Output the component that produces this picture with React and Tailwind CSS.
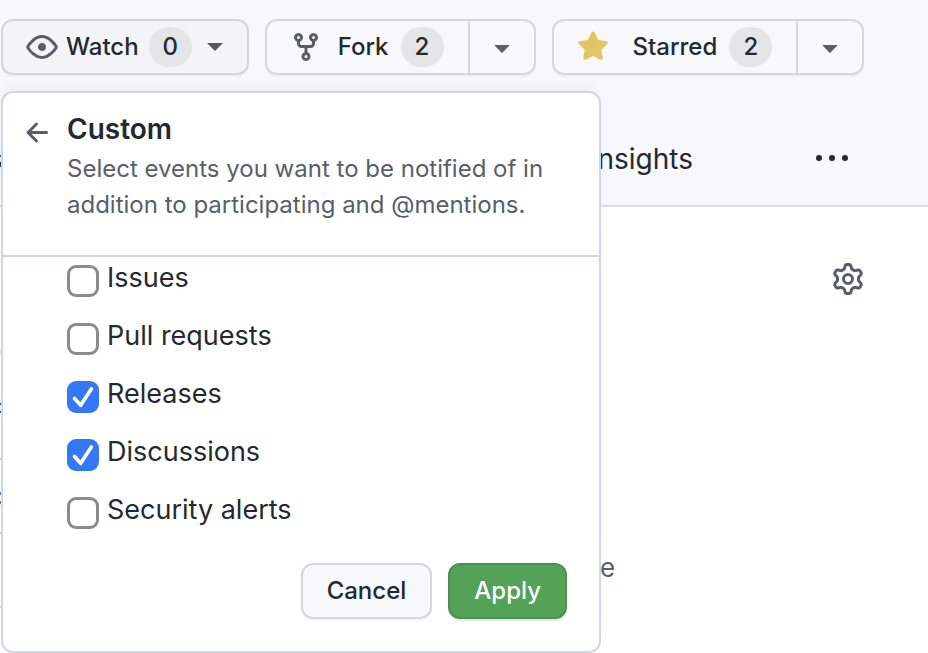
import { useState } from "react";

function Octicon({ d, className = "" }) {
  return (
    <svg viewBox="0 0 16 16" fill="currentColor" aria-hidden="true" className={`size-8 shrink-0 ${className}`}>
      <path d={d} />
    </svg>
  );
}

const EYE =
  "M8 2c1.981 0 3.671.992 4.933 2.078 1.27 1.091 2.187 2.345 2.637 3.023a1.62 1.62 0 0 1 0 1.798c-.45.678-1.367 1.932-2.637 3.023C11.67 13.008 9.981 14 8 14c-1.981 0-3.671-.992-4.933-2.078C1.797 10.83.88 9.576.43 8.898a1.62 1.62 0 0 1 0-1.798c.45-.677 1.367-1.931 2.637-3.022C4.33 2.992 6.019 2 8 2ZM1.679 7.932a.12.12 0 0 0 0 .136c.411.622 1.241 1.75 2.366 2.717C5.176 11.758 6.527 12.5 8 12.5c1.473 0 2.825-.742 3.955-1.715 1.124-.967 1.954-2.096 2.366-2.717a.12.12 0 0 0 0-.136c-.412-.621-1.242-1.75-2.366-2.717C10.824 4.242 9.473 3.5 8 3.5c-1.473 0-2.825.742-3.955 1.715-1.124.967-1.954 2.096-2.366 2.717ZM8 10a2 2 0 1 1-.001-3.999A2 2 0 0 1 8 10Z";
const FORK =
  "M5 5.372v.878c0 .414.336.75.75.75h4.5a.75.75 0 0 0 .75-.75v-.878a2.25 2.25 0 1 1 1.5 0v.878a2.25 2.25 0 0 1-2.25 2.25h-1.5v2.128a2.251 2.251 0 1 1-1.5 0V8.5h-1.5A2.25 2.25 0 0 1 3.5 6.25v-.878a2.25 2.25 0 1 1 1.5 0ZM5 3.25a.75.75 0 1 0-1.5 0 .75.75 0 0 0 1.5 0Zm6.75.75a.75.75 0 1 0 0-1.5.75.75 0 0 0 0 1.5Zm-3 8.75a.75.75 0 1 0-1.5 0 .75.75 0 0 0 1.5 0Z";
const STAR =
  "M8 .25a.75.75 0 0 1 .673.418l1.882 3.815 4.21.612a.75.75 0 0 1 .416 1.279l-3.046 2.97.719 4.192a.751.751 0 0 1-1.088.791L8 12.347l-3.766 1.98a.75.75 0 0 1-1.088-.79l.72-4.194L.818 6.374a.75.75 0 0 1 .416-1.28l4.21-.611L7.327.668A.75.75 0 0 1 8 .25Z";
const ARROW_LEFT =
  "M7.78 12.53a.75.75 0 0 1-1.06 0L2.47 8.28a.75.75 0 0 1 0-1.06l4.25-4.25a.751.751 0 0 1 1.042.018.751.751 0 0 1 .018 1.042L4.81 7h7.44a.75.75 0 0 1 0 1.5H4.81l2.97 2.97a.75.75 0 0 1 0 1.06Z";
const TRIANGLE =
  "m4.427 7.427 3.396 3.396a.25.25 0 0 0 .354 0l3.396-3.396A.25.25 0 0 0 11.396 7H4.604a.25.25 0 0 0-.177.427Z";
const KEBAB =
  "M0 7.5a1.5 1.5 0 1 1 3 0a1.5 1.5 0 0 1-3 0ZM6.5 7.5a1.5 1.5 0 1 1 3 0a1.5 1.5 0 0 1-3 0ZM13 7.5a1.5 1.5 0 1 1 3 0a1.5 1.5 0 0 1-3 0Z";
const GEAR =
  "M8 0a8.2 8.2 0 0 1 .701.031C9.444.095 9.99.645 10.16 1.29l.288 1.107c.018.066.079.158.212.224.231.114.454.243.668.386.123.082.233.09.299.071l1.103-.303c.644-.176 1.392.021 1.82.63.27.385.506.792.704 1.218.315.675.111 1.422-.364 1.891l-.814.806c-.049.048-.098.147-.088.294.016.257.016.515 0 .772-.01.147.038.246.088.294l.814.806c.475.469.679 1.216.364 1.891a7.977 7.977 0 0 1-.704 1.217c-.428.61-1.176.807-1.82.63l-1.102-.302c-.067-.019-.177-.011-.3.071a5.909 5.909 0 0 1-.668.386c-.133.066-.194.158-.211.224l-.29 1.106c-.168.646-.715 1.196-1.458 1.26a8.006 8.006 0 0 1-1.402 0c-.743-.064-1.289-.614-1.458-1.26l-.289-1.106c-.018-.066-.079-.158-.212-.224a5.738 5.738 0 0 1-.668-.386c-.123-.082-.233-.09-.299-.071l-1.103.303c-.644.176-1.392-.021-1.82-.63a8.12 8.12 0 0 1-.704-1.218c-.315-.675-.111-1.422.363-1.891l.815-.806c.05-.048.098-.147.088-.294a6.214 6.214 0 0 1 0-.772c.01-.147-.038-.246-.088-.294l-.815-.806C.635 6.045.431 5.298.746 4.623a7.92 7.92 0 0 1 .704-1.217c.428-.61 1.176-.807 1.82-.63l1.102.302c.067.019.177.011.3-.071.214-.143.437-.272.668-.386.133-.066.194-.158.211-.224l.29-1.106C6.009.645 6.556.095 7.299.03 7.53.01 7.764 0 8 0Zm-.571 1.525c-.036.003-.108.036-.137.146l-.289 1.105c-.147.561-.549.967-.998 1.189-.173.086-.34.183-.5.29-.417.278-.97.423-1.529.27l-1.103-.303c-.109-.03-.175.016-.195.045-.22.312-.412.644-.573.99-.014.031-.021.11.059.19l.815.806c.411.406.562.957.53 1.456a4.709 4.709 0 0 0 0 .582c.032.499-.119 1.05-.53 1.456l-.815.806c-.081.08-.073.159-.059.19.162.346.353.677.573.989.02.03.085.076.195.046l1.102-.303c.56-.153 1.113-.008 1.53.27.161.107.328.204.501.29.447.222.85.629.997 1.189l.289 1.105c.029.109.101.143.137.146a6.6 6.6 0 0 0 1.142 0c.036-.003.108-.036.137-.146l.289-1.105c.147-.561.549-.967.998-1.189.173-.086.34-.183.5-.29.417-.278.97-.423 1.529-.27l1.103.303c.109.029.175-.016.195-.045.22-.313.411-.644.573-.99.014-.031.021-.11-.059-.19l-.815-.806c-.411-.406-.562-.957-.53-1.456a4.709 4.709 0 0 0 0-.582c-.032-.499.119-1.05.53-1.456l.815-.806c.081-.08.073-.159.059-.19a6.464 6.464 0 0 0-.573-.989c-.02-.03-.085-.076-.195-.046l-1.102.303c-.56.153-1.113.008-1.53-.27a4.44 4.44 0 0 0-.501-.29c-.447-.222-.85-.629-.997-1.189l-.289-1.105c-.029-.11-.101-.143-.137-.146a6.6 6.6 0 0 0-1.142 0ZM11 8a3 3 0 1 1-6 0 3 3 0 0 1 6 0ZM9.5 8a1.5 1.5 0 1 0-3.001.001A1.5 1.5 0 0 0 9.5 8Z";

function Counter({ children }) {
  return (
    <span className="flex h-10 w-[43px] items-center justify-center rounded-full bg-[#e4e5e7]">{children}</span>
  );
}

function SplitButton({ icon, iconClass, label, count, menuLabel }) {
  return (
    <div className="flex h-14 rounded-xl border-2 border-[#d5d8da] bg-[#f6f8fa] shadow-[0_2px_0_rgba(27,31,36,0.04)]">
      <button type="button" className="flex items-center pl-[23px] pr-6">
        <Octicon d={icon} className={iconClass} />
        <span className="mr-3">{label}</span>
        <Counter>{count}</Counter>
      </button>
      <button
        type="button"
        aria-label={menuLabel}
        className="flex w-[66px] items-center justify-center border-l-2 border-[#d5d8da] text-[#57606a]"
      >
        <Octicon d={TRIANGLE} />
      </button>
    </div>
  );
}

function EventOption({ label, initial }) {
  const [checked, setChecked] = useState(initial);
  return (
    <label className="flex h-[58px] items-start gap-2 text-[27px] leading-[42px]">
      <span className="mt-2 grid size-8 shrink-0">
        <input
          type="checkbox"
          checked={checked}
          onChange={(e) => setChecked(e.target.checked)}
          className="peer col-start-1 row-start-1 size-8 appearance-none rounded-[9px] border-3 border-[#8b8a8f] bg-white checked:border-[#3478f6] checked:bg-[#3478f6]"
        />
        <svg
          viewBox="0 0 32 32"
          fill="none"
          stroke="white"
          strokeWidth="3.6"
          strokeLinecap="round"
          strokeLinejoin="round"
          aria-hidden="true"
          className="pointer-events-none invisible col-start-1 row-start-1 size-8 peer-checked:visible"
        >
          <path d="M7.5 17.5 13.7 24.3 24.3 8" />
        </svg>
      </span>
      {label}
    </label>
  );
}

function CustomMenu() {
  return (
    <form
      onSubmit={(e) => e.preventDefault()}
      className="absolute left-0 top-full z-10 mt-4 w-[600px] rounded-xl border-2 border-[#d0d7de] bg-white font-normal shadow-[0_-6px_12px_-4px_rgba(140,149,159,0.12)]"
    >
      <div className="flex gap-[13px] border-b-2 border-[#d0d7de] pb-8 pl-[19px] pr-8 pt-4">
        <button type="button" aria-label="Back" className="mt-2 self-start text-[#57606a]">
          <Octicon d={ARROW_LEFT} />
        </button>
        <div>
          <h2 className="text-[28px] font-semibold leading-10">Custom</h2>
          <p className="mt-0.5 text-2xl leading-9 text-[#57606a]">
            Select events you want to be notified of in
            <br />
            addition to participating and @mentions.
          </p>
        </div>
      </div>
      <div className="pl-16">
        <EventOption label="Issues" initial={false} />
        <EventOption label="Pull requests" initial={false} />
        <EventOption label="Releases" initial={true} />
        <EventOption label="Discussions" initial={true} />
        <EventOption label="Security alerts" initial={false} />
      </div>
      <div className="flex justify-end gap-4 px-8 pb-8 pt-4 text-2xl font-medium">
        <button
          type="button"
          className="h-14 rounded-xl border-2 border-[#d5d8da] bg-[#f6f8fa] px-6 shadow-[0_2px_0_rgba(27,31,36,0.04)]"
        >
          Cancel
        </button>
        <button
          type="submit"
          className="h-14 rounded-xl border-2 border-[#4a9150] bg-[#54a258] px-6 text-white shadow-[0_2px_0_rgba(27,31,36,0.1)]"
        >
          Apply
        </button>
      </div>
    </form>
  );
}

export default function App() {
  return (
    <div className="min-h-screen overflow-hidden bg-white font-['Inter','Noto_Sans',sans-serif] text-[#24292f]">
      <header className="border-b-2 border-[#d8dee4] bg-[#f6f8fa]">
        <div className="flex gap-4 pl-px pt-[19px] text-2xl font-medium">
          <div className="relative">
            <button
              type="button"
              className="flex h-14 items-center rounded-xl border-2 border-[#d3d5d7] bg-[#f3f4f6] pl-[23px] pr-6 shadow-[0_2px_0_rgba(27,31,36,0.04)]"
            >
              <Octicon d={EYE} className="mr-2 text-[#57606a]" />
              <span className="mr-2.5">Watch</span>
              <Counter>0</Counter>
              <span className="ml-[15px] border-x-8 border-t-8 border-x-transparent border-t-[#57595e]" />
            </button>
            <CustomMenu />
          </div>
          <SplitButton icon={FORK} iconClass="mr-4 text-[#57606a]" label="Fork" count="2" menuLabel="Fork options" />
          <SplitButton icon={STAR} iconClass="mr-6 text-[#e3c564]" label="Starred" count="2" menuLabel="Star lists" />
        </div>
        <nav className="flex items-center pb-[26px] pr-20 pt-16 text-[28px] leading-10">
          <a href="#security" className="-ml-3">s</a>
          <a href="#insights" className="ml-auto mr-[123px]">Insights</a>
          <button type="button" aria-label="More">
            <Octicon d={KEBAB} />
          </button>
        </nav>
      </header>
      <main className="flex">
        <div className="w-[600px] shrink-0 pt-36 text-[28px]">
          <div className="flex h-[109px] items-center border-y-2 border-[#d8dee4] font-semibold">
            <span className="-ml-3.5">c</span>
          </div>
          <div className="flex h-[74px] items-center border-b-2 border-[#d8dee4] text-[#57606a]">
            <span className="-ml-[13px]">c</span>
          </div>
          <div className="h-[74px] border-b-2 border-[#d8dee4]" />
        </div>
        <aside className="flex-1 pr-16 pt-14">
          <div className="flex justify-end text-[#57606a]">
            <button type="button" aria-label="Edit repository details">
              <Octicon d={GEAR} />
            </button>
          </div>
          <p className="pt-[253px] text-[26px] leading-10 text-[#57606a]">e</p>
        </aside>
      </main>
    </div>
  );
}
